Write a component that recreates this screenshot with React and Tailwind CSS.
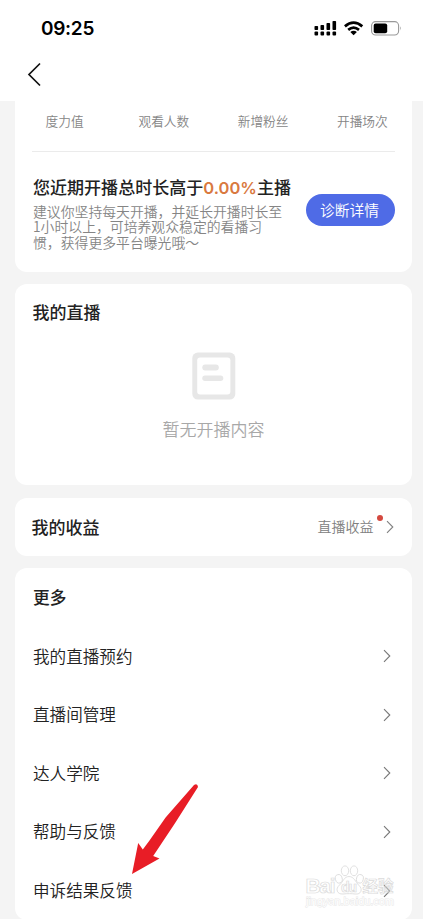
import React from "react";

const stats = ["度力值", "观看人数", "新增粉丝", "开播场次"];

const menu = [
  "我的直播预约",
  "直播间管理",
  "达人学院",
  "帮助与反馈",
  "申诉结果反馈",
];

function Chevron({ className = "" }) {
  return (
    <svg
      className={className}
      width="8"
      height="14"
      viewBox="0 0 8 14"
      fill="none"
      stroke="currentColor"
      strokeWidth="1.1"
    >
      <path d="M1 1.2 L6.8 7 L1 12.8" />
    </svg>
  );
}

function StatusBar() {
  return (
    <div className="flex h-[56px] items-center justify-between pl-[41px] pr-[21px]">
      <span className="font-['Inter'] text-[19px] font-semibold leading-none tracking-[-0.3px] text-black">
        09:25
      </span>
      <svg width="89" height="18" viewBox="0 0 89 18">
        <g fill="#000">
          <rect x="1.5" y="7" width="3.6" height="4" rx="0.8" />
          <rect x="7.5" y="6" width="3.6" height="5" rx="0.8" />
          <rect x="13.5" y="4" width="3.6" height="7" rx="0.8" />
          <rect x="19.5" y="2" width="3.6" height="9" rx="0.8" />
          <rect x="1.5" y="12.6" width="3.6" height="3.8" rx="1" />
          <rect x="7.5" y="12.6" width="3.6" height="3.8" rx="1" />
          <rect x="13.5" y="12.6" width="3.6" height="3.8" rx="1" />
          <rect x="19.5" y="12.6" width="3.6" height="3.8" rx="1" />
        </g>
        <g fill="none" stroke="#000" strokeWidth="2.7">
          <path d="M31.9 7.4 Q40.6 0 49.3 7.4" />
          <path d="M35.2 10.9 Q40.6 6.4 46 10.9" />
        </g>
        <path d="M37.3 13 Q40.6 10.6 43.9 13 L40.6 16.3 Z" fill="#000" />
        <rect x="58.6" y="2.6" width="27" height="13.4" rx="4" fill="none" stroke="#999" strokeWidth="1.1" />
        <rect x="60.7" y="4.6" width="13.5" height="9.7" rx="2" fill="#000" />
        <path d="M87 7.2 Q88.8 9.3 87 11.4 Z" fill="#999" />
      </svg>
    </div>
  );
}

function EmptyIcon() {
  return (
    <svg width="44" height="48" viewBox="0 0 44 48">
      <rect x="0.3" y="0.6" width="43" height="47" rx="5.5" fill="#e7e7e7" />
      <rect x="5.2" y="5.6" width="33.2" height="37" rx="3" fill="#fff" />
      <rect x="10.3" y="12.6" width="16.5" height="5.8" rx="2.9" fill="#e7e7e7" />
      <rect x="10.3" y="23.6" width="21" height="5.4" rx="2.7" fill="#e7e7e7" />
    </svg>
  );
}

function Arrow() {
  return (
    <svg
      className="pointer-events-none absolute left-[128px] top-[780px]"
      width="74"
      height="98"
      viewBox="0 0 74 98"
    >
      <path
        d="M66 5 Q69.6 3 70 7 L46.8 43.5 L25.2 76 L31.5 78.4 L4 94 L10.2 63 L14.8 69.6 L21.5 60.5 L37.6 37.5 Z"
        fill="#e81d26"
      />
    </svg>
  );
}

function Watermark() {
  return (
    <svg
      className="pointer-events-none absolute left-[304px] top-[862px] opacity-75"
      width="94"
      height="46"
      viewBox="0 0 94 46"
    >
      <g fill="#fff" fillOpacity="0.4" stroke="#d2d2d2" strokeWidth="0.9">
        <ellipse cx="34.8" cy="16.8" rx="3.4" ry="4.3" transform="rotate(-15 34.8 16.8)" />
        <ellipse cx="41" cy="8.8" rx="3.7" ry="4.9" />
        <ellipse cx="50" cy="8.8" rx="3.7" ry="4.9" />
        <ellipse cx="55.9" cy="16.8" rx="3.4" ry="4.3" transform="rotate(15 55.9 16.8)" />
        <path d="M45 14.5 C40 14.5 39 20 35.5 23 C31 27 33 32.5 39 32 C43 31.5 48 31.5 51 32 C57.4 32.8 59 27 55 23.5 C51.5 20 50 14.5 45 14.5 Z" />
      </g>
      <g fill="#fff" fillOpacity="0.5" stroke="#cfcfcf" strokeWidth="0.7" className="font-['Liberation_Sans'] font-bold">
        <text x="1.5" y="30.8" fontSize="21" textLength="30">Bai</text>
        <text x="37" y="29.5" fontSize="14" textLength="16">du</text>
        <text x="58.5" y="30" fontSize="15.5" textLength="31" className="font-['Noto_Sans_CJK_SC']">经验</text>
      </g>
      <text
        x="2"
        y="42.5"
        fontSize="11"
        textLength="88"
        fill="#fff"
        stroke="#dedede"
        strokeWidth="0.9"
        paintOrder="stroke"
        className="font-['Liberation_Sans']"
      >
        jingyan.baidu.com
      </text>
    </svg>
  );
}

export default function App() {
  return (
    <div className="relative h-[919px] w-[423px] overflow-hidden bg-[#f4f4f4] font-['Noto_Sans_CJK_SC',sans-serif] text-[#222]">
      <header className="h-[101px] bg-white">
        <StatusBar />
        <div className="flex pl-[27px] pt-[6px]">
          <svg width="15" height="25" viewBox="0 0 15 25" fill="none" stroke="#111" strokeWidth="1.7">
            <path d="M13 1.5 L2 12.5 L13 23.5" />
          </svg>
        </div>
      </header>

      <main className="flex flex-col gap-[12.5px] pl-[15px] pr-[11px]">
        <section className="h-[170.5px] rounded-b-[12px] bg-white">
          <div className="grid h-[50px] grid-cols-4 items-center pb-[10px] text-center text-[12.7px] font-[350] leading-none text-[#858585]">
            {stats.map((label) => (
              <span key={label}>{label}</span>
            ))}
          </div>
          <div className="mx-[17px] border-t border-[#ebebeb]" />
          <div className="flex justify-between pl-[18px] pr-[17px] pt-[25px]">
            <div className="whitespace-nowrap">
              <h2 className="text-[17.05px] font-medium leading-[20px]">
                您近期开播总时长高于
                <span className="font-['Inter'] text-[16.5px] font-semibold text-[#d9793f]">0.00%</span>
                主播
              </h2>
              <p className="mt-[6px] text-[13.85px] font-[350] leading-[15.4px] text-[#858585]">
                建议你坚持每天开播，并延长开播时长至
                <br />
                1小时以上，可培养观众稳定的看播习
                <br />
                惯，获得更多平台曝光哦～
              </p>
            </div>
            <button className="-ml-4 mt-[17px] h-[32px] w-[89px] shrink-0 rounded-full bg-[#4f6be6] pr-[2px] text-[14.8px] font-[350] leading-none text-white">
              诊断详情
            </button>
          </div>
        </section>

        <section className="h-[201px] rounded-[12px] bg-white pt-[18px]">
          <h2 className="pl-[17.5px] text-[17px] font-medium leading-[20px]">我的直播</h2>
          <div className="mt-[30px] flex flex-col items-center">
            <EmptyIcon />
            <p className="mt-[19px] text-[17px] font-[350] leading-[20px] text-[#a8a8a8]">
              暂无开播内容
            </p>
          </div>
        </section>

        <section className="flex h-[58px] items-center justify-between rounded-[12px] bg-white pl-[16.5px] pr-[18px]">
          <h2 className="text-[17px] font-medium leading-[20px]">我的收益</h2>
          <div className="flex items-center text-[#808080]">
            <span className="mb-[2px] text-[14px] font-[350] leading-none">直播收益</span>
            <span className="mb-[17px] ml-[3px] size-[6.5px] rounded-full bg-[#d4493f]" />
            <Chevron className="ml-[3px]" />
          </div>
        </section>

        <section className="h-[352px] rounded-[12px] bg-white">
          <h2 className="pl-[18px] pt-[18.5px] text-[16.7px] font-medium leading-[20px]">更多</h2>
          <ul className="mt-[20px]">
            {menu.map((item) => (
              <li
                key={item}
                className="flex h-[58.6px] items-center justify-between pl-[18px] pr-[21px]"
              >
                <span className="text-[16.6px] font-[350] leading-none">{item}</span>
                <Chevron className="mt-px text-[#777]" />
              </li>
            ))}
          </ul>
        </section>
      </main>

      <Arrow />
      <Watermark />
    </div>
  );
}
